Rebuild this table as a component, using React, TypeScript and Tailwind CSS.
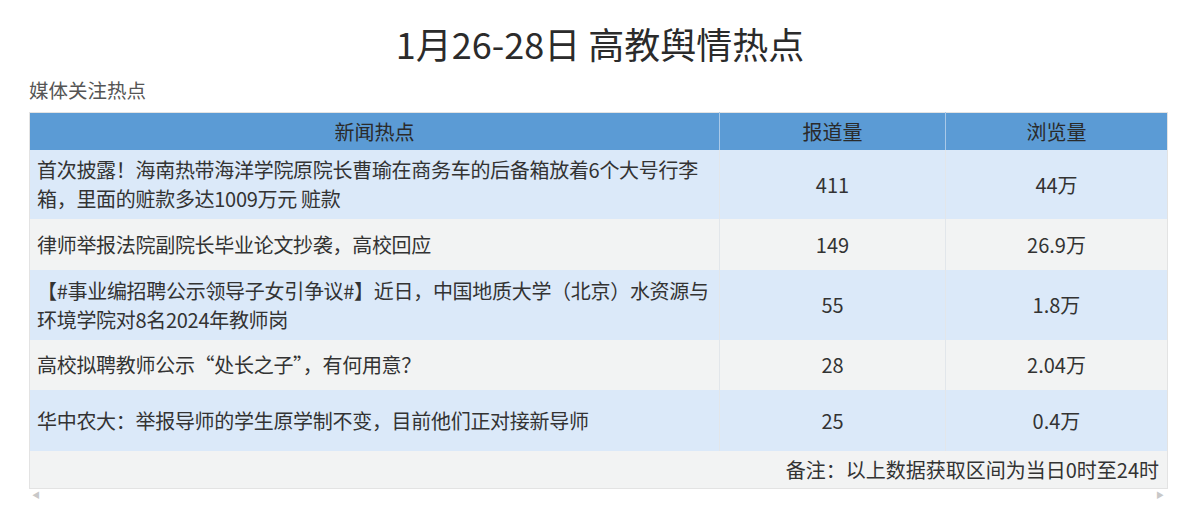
import React from 'react';

const rows = [
    { lines: ['首次披露！海南热带海洋学院原院长曹瑜在商务车的后备箱放着6个大号行李', '箱，里面的赃款多达1009万元 赃款'], reports: '411', views: '44万', h: 'h-[69px]' },
    { lines: ['律师举报法院副院长毕业论文抄袭，高校回应'], reports: '149', views: '26.9万', h: 'h-[51px]' },
    { lines: ['【#事业编招聘公示领导子女引争议#】近日，中国地质大学（北京）水资源与', '环境学院对8名2024年教师岗'], reports: '55', views: '1.8万', h: 'h-[70px]' },
    { lines: ['高校拟聘教师公示“处长之子”，有何用意？'], reports: '28', views: '2.04万', h: 'h-[50px]' },
    { lines: ['华中农大：举报导师的学生原学制不变，目前他们正对接新导师'], reports: '25', views: '0.4万', h: 'h-[61px]' },
];

const App: React.FC = () => {
    return (
        <div className="w-[1200px] h-[512px] bg-white text-[#333] font-['Noto_Sans_CJK_SC','Noto_Sans',sans-serif] overflow-hidden">
            <h1 className="pt-[24px] text-center text-[36px] leading-[38px] font-normal text-[#2b2b2b]">1月26-28日 高教舆情热点</h1>
            <div className="mt-[16px] ml-[29px] text-[19.5px] leading-[24px] text-[#555]">媒体关注热点</div>

            <div className="mt-[10px] ml-[29px] w-[1138px]">
                <table className="w-full table-fixed border-collapse border border-[#e3e3e3] text-[20px] leading-[29px]">
                    <colgroup>
                        <col className="w-[690px]" />
                        <col className="w-[226px]" />
                        <col className="w-[222px]" />
                    </colgroup>
                    <thead>
                        <tr className="h-[37px] bg-[#5b9bd5] text-[#2a2a2a]">
                            <th className="font-normal border-r border-[#a9c9e8]">新闻热点</th>
                            <th className="font-normal border-r border-[#a9c9e8]">报道量</th>
                            <th className="font-normal">浏览量</th>
                        </tr>
                    </thead>
                    <tbody>
                        {rows.map((r, i) => (
                            <tr key={i} className={`${r.h} ${i % 2 === 0 ? 'bg-[#dbe9f9]' : 'bg-[#f2f3f3]'}`}>
                                <td className="px-[7px] align-middle border-r border-[#e2e6ea]">
                                    {r.lines.map((l, j) => (
                                        <div key={j} className="whitespace-nowrap tracking-[-0.3px]">{l}</div>
                                    ))}
                                </td>
                                <td className="text-center align-middle border-r border-[#e2e6ea]">{r.reports}</td>
                                <td className="text-center align-middle">{r.views}</td>
                            </tr>
                        ))}
                        <tr className="h-[38px] bg-[#f2f3f3]">
                            <td colSpan={3} className="text-right pr-[8px]">备注：以上数据获取区间为当日0时至24时</td>
                        </tr>
                    </tbody>
                </table>
                <div className="flex justify-between px-[3px] mt-[1px] text-[8px] leading-[10px] text-[#c8c8c8]">
                    <span>◀</span>
                    <span>▶</span>
                </div>
            </div>
        </div>
    );
};

export default App;
